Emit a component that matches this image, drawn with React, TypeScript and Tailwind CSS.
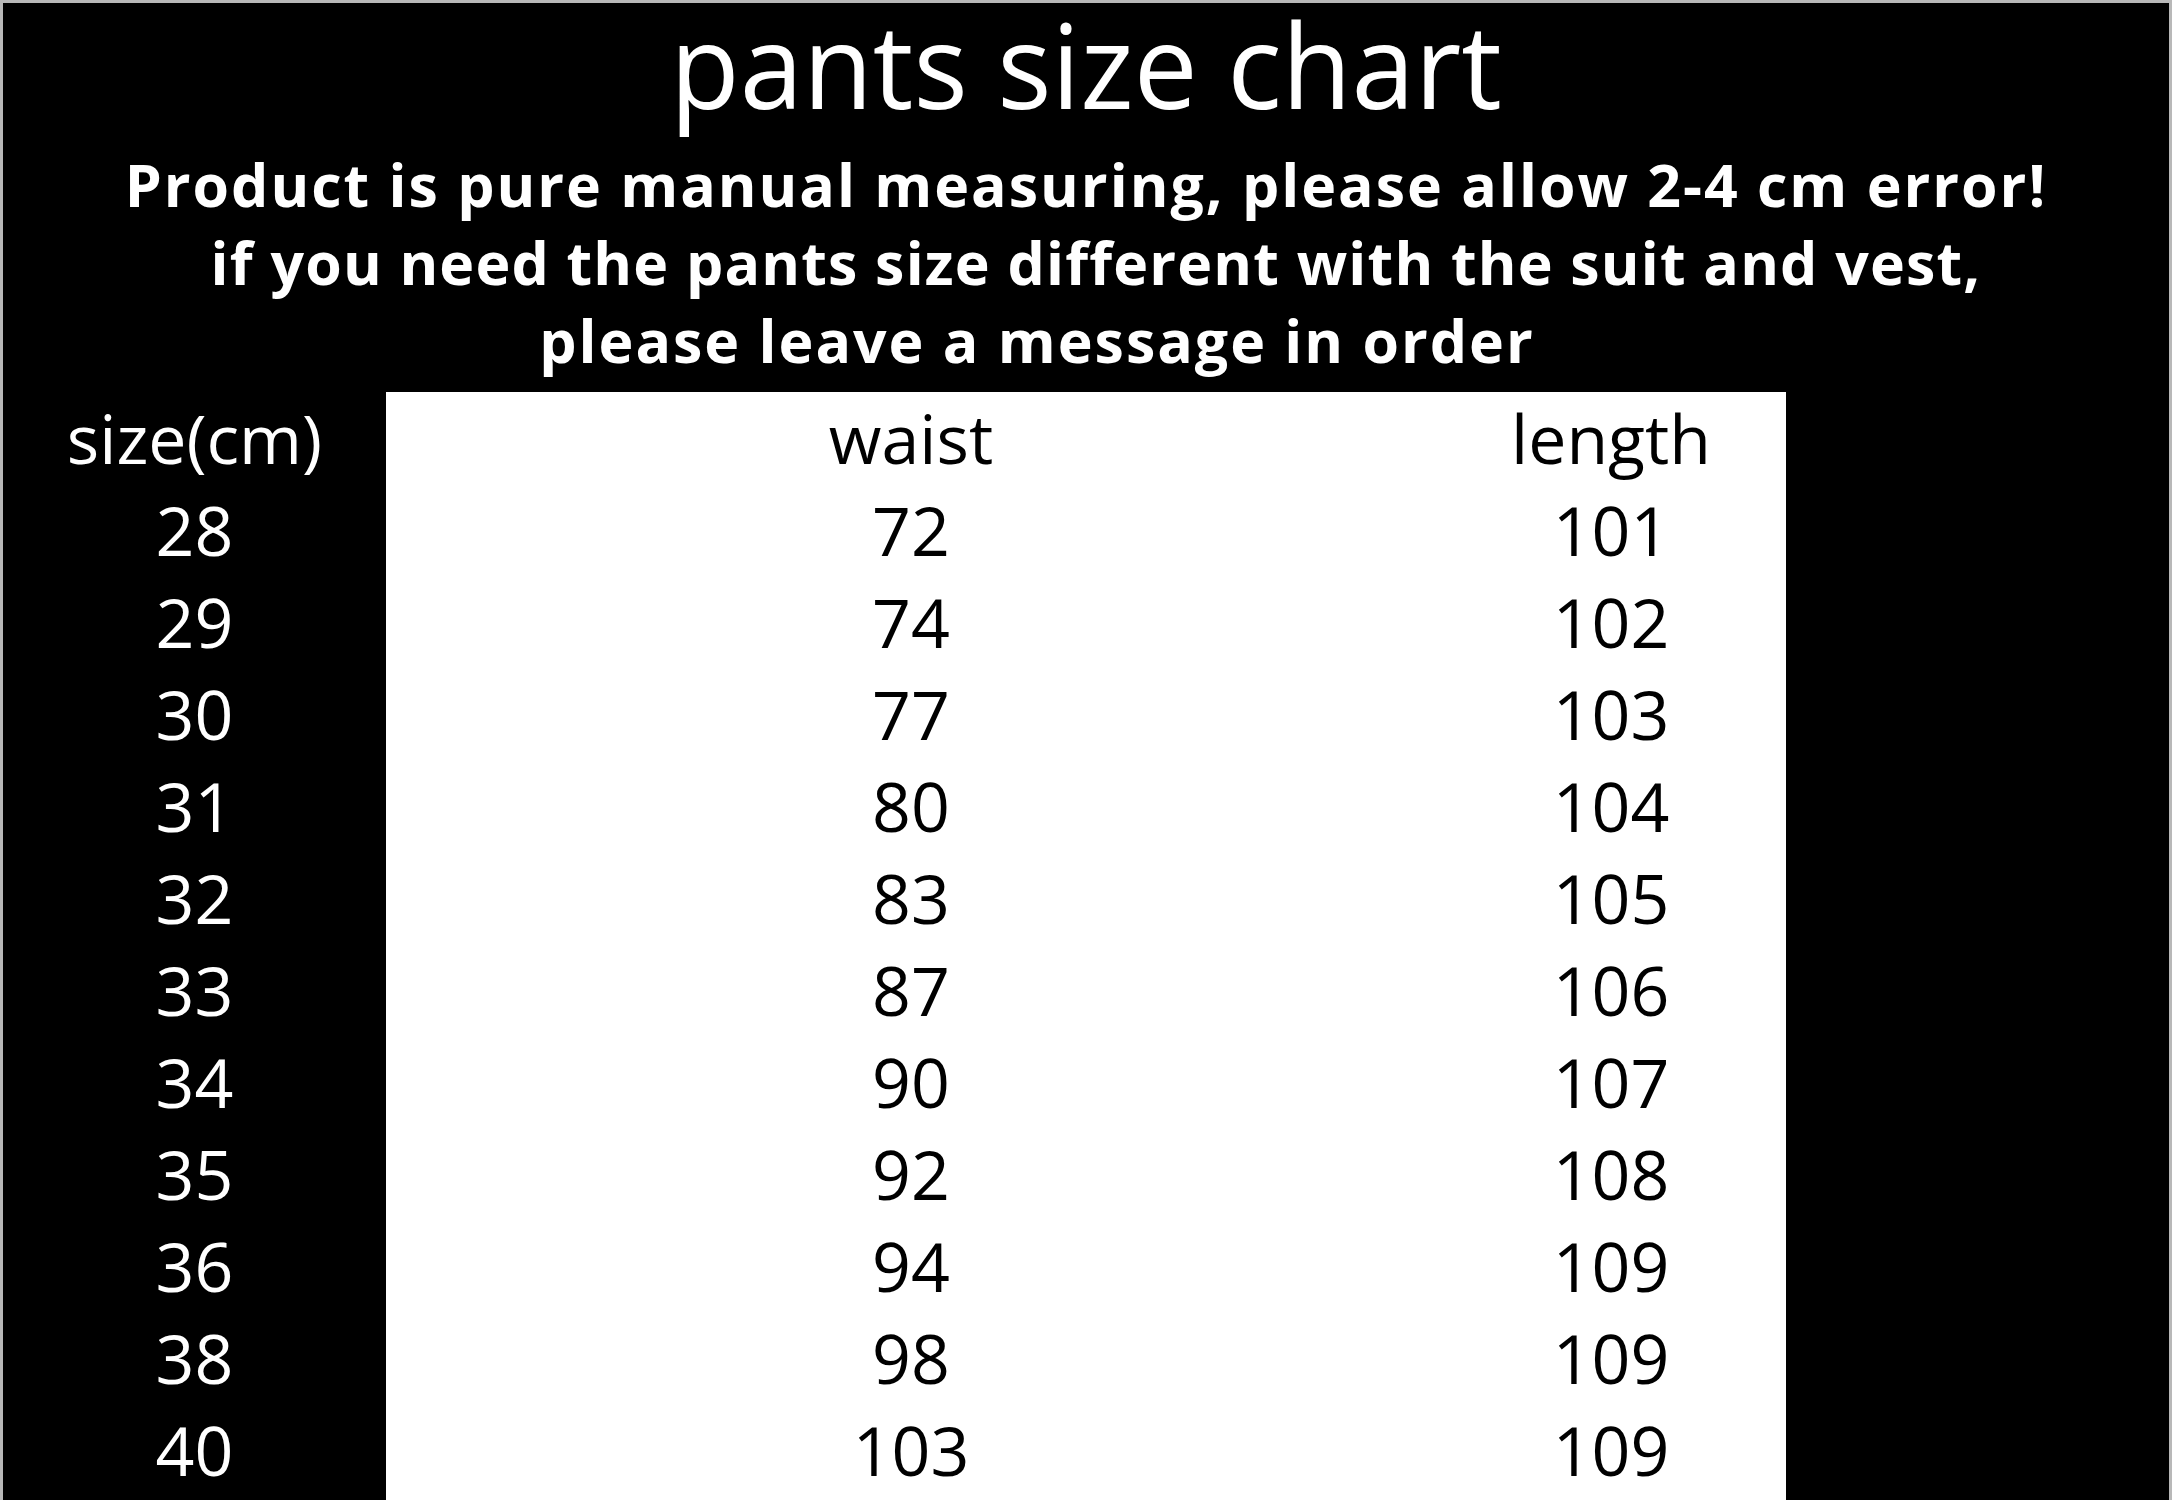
import React from "react";

const rows: [string, string, string][] = [
  ["28", "72", "101"],
  ["29", "74", "102"],
  ["30", "77", "103"],
  ["31", "80", "104"],
  ["32", "83", "105"],
  ["33", "87", "106"],
  ["34", "90", "107"],
  ["35", "92", "108"],
  ["36", "94", "109"],
  ["38", "98", "109"],
  ["40", "103", "109"],
];

export default function App() {
  return (
    <div
      className="w-[2172px] h-[1500px] overflow-hidden bg-black border-[3px] border-b-0 border-[#b8b8b8] flex flex-col"
      style={{ fontFamily: '"Open Sans", "Noto Sans", sans-serif' }}
    >
      <h1 className="h-[142px] pt-[2px] text-center text-white text-[118px] leading-[118px] font-normal scale-x-[0.965]">
        pants size chart
      </h1>
      <div className="flex flex-col items-center text-white text-[59px] leading-[78px] font-bold tracking-[2px]">
        <p>Product is pure manual measuring, please allow 2-4 cm error!</p>
        <p className="pl-[20px] tracking-[1.2px]">if you need the pants size different with the suit and vest,</p>
        <p className="pr-[98px]">please leave a message in order</p>
      </div>
      <div className="mt-[13px] flex flex-1 text-[68px] leading-[92px]">
        <div className="w-[383px] flex flex-col items-center text-white">
          <div>size(cm)</div>
          {rows.map((r) => (
            <div key={r[0]}>{r[0]}</div>
          ))}
        </div>
        <div className="w-[1400px] bg-white flex text-black">
          <div className="w-[1050px] flex flex-col items-center">
            <div>waist</div>
            {rows.map((r) => (
              <div key={r[0]}>{r[1]}</div>
            ))}
          </div>
          <div className="w-[350px] flex flex-col items-center">
            <div>length</div>
            {rows.map((r) => (
              <div key={r[0]}>{r[2]}</div>
            ))}
          </div>
        </div>
        <div className="flex-1" />
      </div>
    </div>
  );
}
